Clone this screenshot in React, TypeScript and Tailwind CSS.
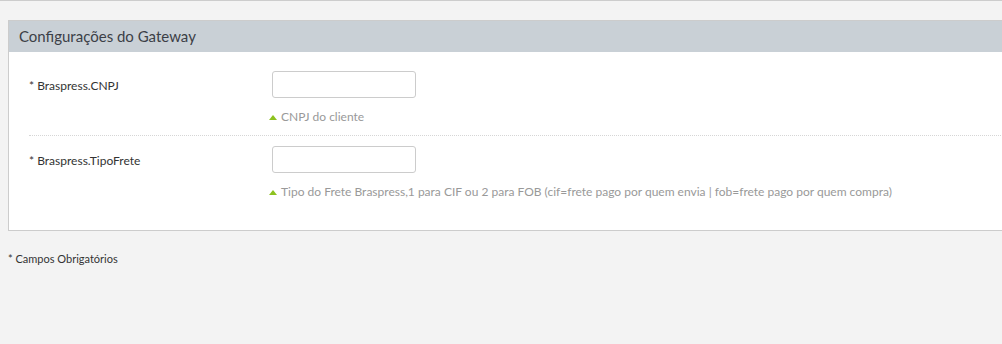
export default function App() {
  const rows = [
    { label: "Braspress.CNPJ", help: "CNPJ do cliente" },
    {
      label: "Braspress.TipoFrete",
      help: "Tipo do Frete Braspress,1 para CIF ou 2 para FOB (cif=frete pago por quem envia | fob=frete pago por quem compra)",
    },
  ];

  return (
    <div
      className="h-[344px] w-[1002px] overflow-hidden border-t border-[#cccccc] bg-[#f3f3f3] pl-2 pt-[19px]"
      style={{ fontFamily: "Lato, 'Open Sans', sans-serif" }}
    >
      <div className="-mr-4 border border-[#cccccc] bg-white">
        <div className="h-[31px] bg-[#c9d0d6] pl-[10px] pt-[4px] text-[15px] leading-[22px] text-[#3c3f47]">
          Configurações do Gateway
        </div>
        <div className="pb-[30px] pl-5">
          {rows.map((row, i) => (
            <div
              key={row.label}
              className={`flex ${i === 0 ? "border-b border-dotted border-[#d6d6d6] pb-[10px] pt-[19px]" : "pt-[10px]"}`}
            >
              <div className="w-[243px] pt-[7px] text-[12px] leading-[16px] text-[#333333]">
                * {row.label}
              </div>
              <div>
                <input
                  type="text"
                  className="block h-[27px] w-[144px] rounded-[3px] border border-[#cccccc] bg-white"
                />
                <div className="mt-[11px] flex items-center text-[12px] leading-[16px] text-[#999999]">
                  <span className="mr-[4px] ml-[-3px] h-0 w-0 border-x-[4px] border-b-[5px] border-x-transparent border-b-[#8dc21f]" />
                  {row.help}
                </div>
              </div>
            </div>
          ))}
        </div>
      </div>
      <div className="mt-[21px] text-[11px] leading-[14px] text-[#333333]">* Campos Obrigatórios</div>
    </div>
  );
}
